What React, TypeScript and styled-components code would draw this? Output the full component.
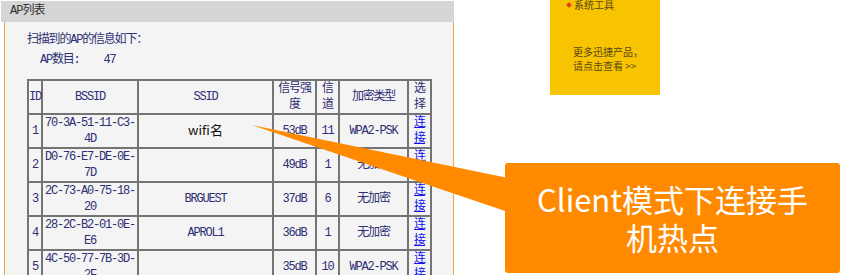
import React from 'react';
import styled, { createGlobalStyle } from 'styled-components';

const GlobalStyle = createGlobalStyle`
  html, body {
    margin: 0;
    padding: 0;
    background: #ffffff;
    overflow: hidden;
  }
`;

const Page = styled.div`
  position: relative;
  width: 843px;
  height: 275px;
  overflow: hidden;
  display: flex;
  align-items: flex-start;
`;

const Panel = styled.div`
  margin: 1px 0 0 1px;
  width: 453px;
  display: flex;
  flex-direction: column;
`;

const PanelHeader = styled.div`
  height: 21px;
  line-height: 21px;
  padding-left: 9px;
  background: #d6d6d6;
  color: #333333;
  font-family: 'Liberation Mono', 'Noto Sans CJK SC', monospace;
  font-size: 12px;
  letter-spacing: -1px;
`;

const PanelBody = styled.div`
  margin-left: 3px;
  min-height: 300px;
  padding: 10px 0 0 22px;
  background: #f4f4f4;
  border-left: 1px solid #f0a551;
  border-right: 1px solid #f0a551;
  color: #2e2e72;
  font-family: 'Liberation Mono', 'Noto Sans CJK SC', monospace;
  font-size: 12px;
  letter-spacing: -1.2px;
`;

const Line = styled.div<{ indent?: number }>`
  height: 16px;
  line-height: 16px;
  margin-bottom: 4px;
  padding-left: ${({ indent }) => indent ?? 0}px;
  white-space: pre;
`;

const Table = styled.table`
  margin-top: 11px;
  width: 403px;
  table-layout: fixed;
  border-collapse: collapse;
  border: 2px solid #6e6e6e;
`;

const Cell = styled.td`
  height: 32px;
  padding: 0;
  border: 2px solid #747474;
  text-align: center;
  vertical-align: middle;
  line-height: 16px;
  color: #2e2e72;
  white-space: nowrap;
  overflow: visible;
`;

const HeadCell = styled(Cell).attrs({ as: 'th' })`
  font-weight: normal;
`;

const WifiName = styled.span`
  font-family: 'Noto Sans CJK SC', sans-serif;
  font-size: 13px;
  letter-spacing: 0;
  color: #111111;
`;

const ConnectLink = styled.a`
  color: #1010f0;
  text-decoration: underline;
  cursor: pointer;
`;

const Sidebar = styled.div`
  margin-left: 96px;
  width: 110px;
  height: 95px;
  background: #f8c300;
  color: #574817;
  font-family: 'Noto Sans CJK SC', sans-serif;
  font-size: 10px;
  box-sizing: border-box;
  padding-left: 17px;
`;

const MenuItem = styled.div`
  margin-top: -1px;
  height: 12px;
  line-height: 12px;
  display: flex;
  align-items: center;
  gap: 3px;
`;

const Diamond = styled.span`
  display: inline-block;
  width: 4px;
  height: 4px;
  background: #e3341c;
  transform: rotate(45deg);
`;

const Promo = styled.div`
  margin-top: 34px;
  padding-left: 6px;
  line-height: 14px;
`;

const Wedge = styled.svg`
  position: absolute;
  left: 0;
  top: 0;
  pointer-events: none;
`;

const Callout = styled.div`
  position: absolute;
  left: 505px;
  top: 163px;
  width: 335px;
  height: 110px;
  box-sizing: border-box;
  padding: 0 26px;
  border-radius: 3px;
  background: #ff8a00;
  color: #ffffff;
  font-family: 'Noto Sans CJK SC', sans-serif;
  font-size: 31px;
  line-height: 38px;
  text-align: center;
  display: flex;
  align-items: center;
  justify-content: center;
`;

type Row = {
  id: number;
  bssid: [string, string];
  ssid: string;
  signal: string;
  channel: number;
  security: string;
};

const rows: Row[] = [
  { id: 1, bssid: ['70-3A-51-11-C3-', '4D'], ssid: 'wifi名', signal: '53dB', channel: 11, security: 'WPA2-PSK' },
  { id: 2, bssid: ['D0-76-E7-DE-0E-', '7D'], ssid: '', signal: '49dB', channel: 1, security: '无加密' },
  { id: 3, bssid: ['2C-73-A0-75-18-', '20'], ssid: 'BRGUEST', signal: '37dB', channel: 6, security: '无加密' },
  { id: 4, bssid: ['28-2C-B2-01-0E-', 'E6'], ssid: 'APROL1', signal: '36dB', channel: 1, security: '无加密' },
  { id: 5, bssid: ['4C-50-77-7B-3D-', '2F'], ssid: '', signal: '35dB', channel: 10, security: 'WPA2-PSK' },
];

const App: React.FC = () => (
  <>
    <GlobalStyle />
    <Page>
      <Panel>
        <PanelHeader>AP列表</PanelHeader>
        <PanelBody>
          <Line>扫描到的AP的信息如下：</Line>
          <Line indent={13}>{'AP数目:    47'}</Line>
          <Table>
            <colgroup>
              <col style={{ width: 14 }} />
              <col style={{ width: 96 }} />
              <col style={{ width: 135 }} />
              <col style={{ width: 43 }} />
              <col style={{ width: 23 }} />
              <col style={{ width: 69 }} />
              <col style={{ width: 23 }} />
            </colgroup>
            <thead>
              <tr>
                <HeadCell>ID</HeadCell>
                <HeadCell>BSSID</HeadCell>
                <HeadCell>SSID</HeadCell>
                <HeadCell>
                  信号强
                  <br />度
                </HeadCell>
                <HeadCell>
                  信<br />道
                </HeadCell>
                <HeadCell>加密类型</HeadCell>
                <HeadCell>
                  选<br />择
                </HeadCell>
              </tr>
            </thead>
            <tbody>
              {rows.map((row) => (
                <tr key={row.id}>
                  <Cell>{row.id}</Cell>
                  <Cell>
                    {row.bssid[0]}
                    <br />
                    {row.bssid[1]}
                  </Cell>
                  <Cell>{row.id === 1 ? <WifiName>{row.ssid}</WifiName> : row.ssid}</Cell>
                  <Cell>{row.signal}</Cell>
                  <Cell>{row.channel}</Cell>
                  <Cell>{row.security}</Cell>
                  <Cell>
                    <ConnectLink>连</ConnectLink>
                    <br />
                    <ConnectLink>接</ConnectLink>
                  </Cell>
                </tr>
              ))}
            </tbody>
          </Table>
        </PanelBody>
      </Panel>
      <Sidebar>
        <MenuItem>
          <Diamond />
          系统工具
        </MenuItem>
        <Promo>
          更多迅捷产品，
          <br />
          请点击查看 &gt;&gt;
        </Promo>
      </Sidebar>
      <Wedge width={843} height={275} viewBox="0 0 843 275">
        <polygon points="252,125 508,178 508,212" fill="#ff8a00" />
      </Wedge>
      <Callout>Client模式下连接手机热点</Callout>
    </Page>
  </>
);

export default App;
